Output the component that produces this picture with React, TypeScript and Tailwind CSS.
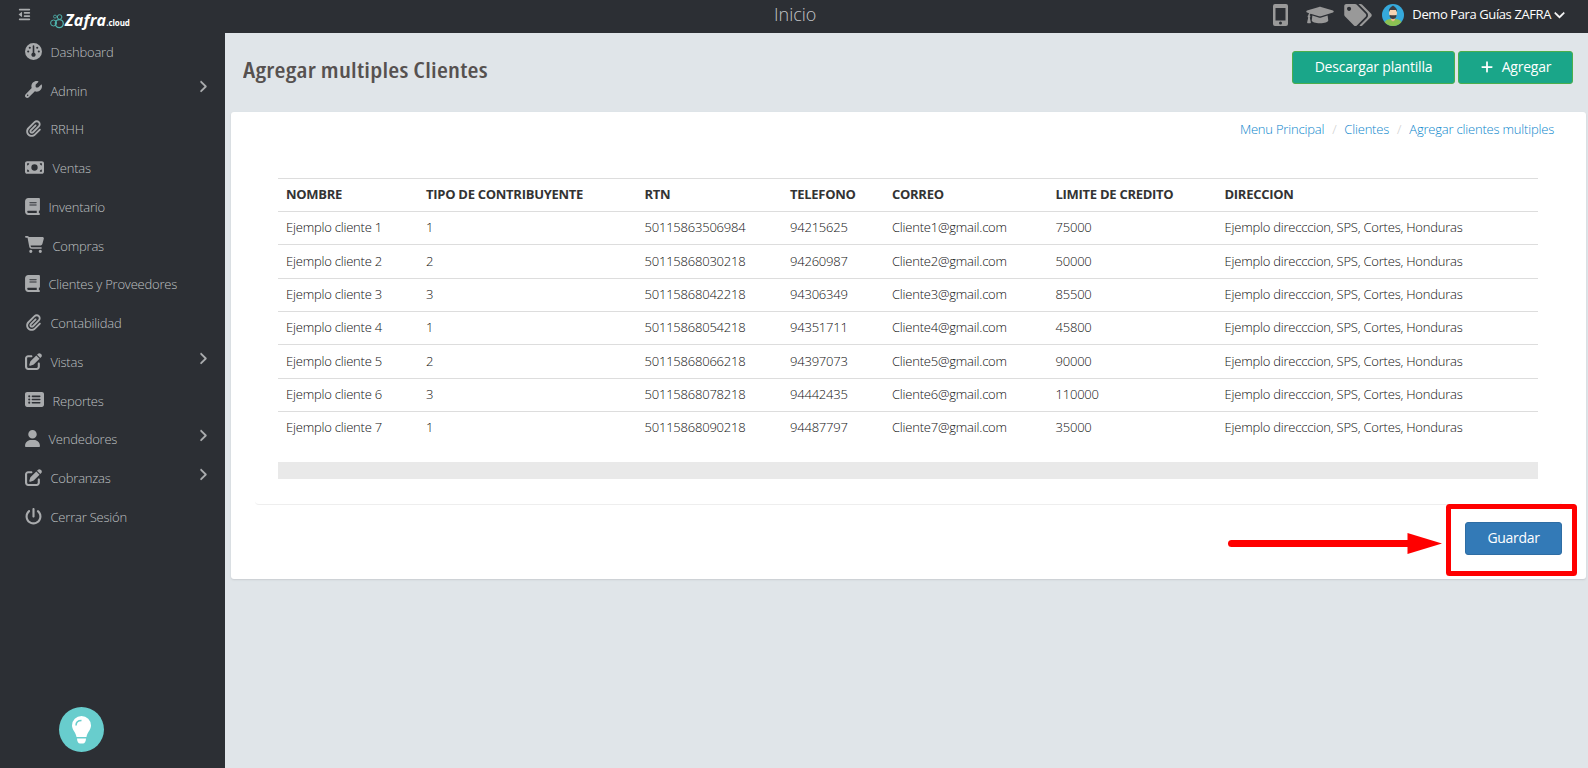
import type { IconType } from "react-icons";
import { FaGraduationCap, FaTags } from "react-icons/fa";
import {
  FaAngleRight,
  FaBook,
  FaCartShopping,
  FaChevronDown,
  FaGauge,
  FaMoneyBill,
  FaOutdent,
  FaPaperclip,
  FaPenToSquare,
  FaPlus,
  FaPowerOff,
  FaRectangleList,
  FaUser,
  FaWrench,
} from "react-icons/fa6";

type MenuItem = {
  label: string;
  icon: IconType;
  width: string;
  submenu?: boolean;
};

const menu: MenuItem[] = [
  { label: "Dashboard", icon: FaGauge, width: "w-[17px]" },
  { label: "Admin", icon: FaWrench, width: "w-[17px]", submenu: true },
  { label: "RRHH", icon: FaPaperclip, width: "w-[17px]" },
  { label: "Ventas", icon: FaMoneyBill, width: "w-[19px]" },
  { label: "Inventario", icon: FaBook, width: "w-[15px]" },
  { label: "Compras", icon: FaCartShopping, width: "w-[19px]" },
  { label: "Clientes y Proveedores", icon: FaBook, width: "w-[15px]" },
  { label: "Contabilidad", icon: FaPaperclip, width: "w-[17px]" },
  { label: "Vistas", icon: FaPenToSquare, width: "w-[17px]", submenu: true },
  { label: "Reportes", icon: FaRectangleList, width: "w-[19px]" },
  { label: "Vendedores", icon: FaUser, width: "w-[15px]", submenu: true },
  { label: "Cobranzas", icon: FaPenToSquare, width: "w-[17px]", submenu: true },
  { label: "Cerrar Sesión", icon: FaPowerOff, width: "w-[17px]" },
];

const columns = [
  { label: "NOMBRE", width: "w-[140px]" },
  { label: "TIPO DE CONTRIBUYENTE", width: "w-[218.5px]" },
  { label: "RTN", width: "w-[145.5px]" },
  { label: "TELEFONO", width: "w-[102px]" },
  { label: "CORREO", width: "w-[163.5px]" },
  { label: "LIMITE DE CREDITO", width: "w-[169px]" },
  { label: "DIRECCION", width: "w-[321.5px]" },
];

const direccion = "Ejemplo direcccion, SPS, Cortes, Honduras";

const clientes = [
  ["Ejemplo cliente 1", "1", "50115863506984", "94215625", "Cliente1@gmail.com", "75000", direccion],
  ["Ejemplo cliente 2", "2", "50115868030218", "94260987", "Cliente2@gmail.com", "50000", direccion],
  ["Ejemplo cliente 3", "3", "50115868042218", "94306349", "Cliente3@gmail.com", "85500", direccion],
  ["Ejemplo cliente 4", "1", "50115868054218", "94351711", "Cliente4@gmail.com", "45800", direccion],
  ["Ejemplo cliente 5", "2", "50115868066218", "94397073", "Cliente5@gmail.com", "90000", direccion],
  ["Ejemplo cliente 6", "3", "50115868078218", "94442435", "Cliente6@gmail.com", "110000", direccion],
  ["Ejemplo cliente 7", "1", "50115868090218", "94487797", "Cliente7@gmail.com", "35000", direccion],
];

function Logo() {
  return (
    <div className="flex items-center text-white italic">
      <svg className="w-3.5 h-[15px] mr-px" viewBox="0 0 14 15" fill="none" stroke="#4fb3ad">
        <circle cx="3.6" cy="9" r="3" />
        <circle cx="9.3" cy="9.6" r="4" strokeWidth="1.3" />
        <circle cx="5" cy="2.6" r="1.5" strokeWidth="0.8" />
        <circle cx="9.6" cy="3" r="2.3" />
      </svg>
      <span className="text-[16px] leading-5 font-bold tracking-[0.2px] -mt-[2px]">Zafra</span>
      <span className="text-[8px] leading-5 font-bold not-italic tracking-[-0.1px] pt-[4px]">.cloud</span>
    </div>
  );
}

function Avatar() {
  return (
    <svg className="w-[22px] h-[22px]" viewBox="0 0 22 22">
      <circle cx="11" cy="11" r="11" fill="#35a9dc" />
      <path d="M2.500 18C4 15.500 7 15 11 15s7 .5 8.500 3A11 11 0 0 1 2.500 18z" fill="#8cc152" />
      <path d="M9 13h4v3l-2 1.500L9 16z" fill="#e8b98e" />
      <ellipse cx="11" cy="9" rx="4" ry="4.500" fill="#f6d3b3" />
      <path d="M7 8C6.500 4.500 8.500 3.500 11 1.500c2.500 2 4.500 3 4 6.500L14 6H8z" fill="#3b3e44" />
      <path d="M7.500 11l2 .3h3l2-.3c0 2.500-1.500 4-3.500 4s-3.500-1.500-3.500-4z" fill="#3b3e44" />
    </svg>
  );
}

function Header() {
  return (
    <header className="flex h-[33px] bg-[#2c2f34] text-[#a9abad]">
      <div className="flex w-[225px] pl-[18px]">
        <FaOutdent className="w-[13px] h-[13px] mt-2" />
        <div className="ml-[19px] mt-[9px]">
          <Logo />
        </div>
      </div>
      <div className="flex-1 pl-[549px] pt-[2px] text-lg leading-[25px] font-light text-[#c3c4c6]">
        Inicio
      </div>
      <div className="flex items-start pr-[23px] text-[#999]">
        <svg className="w-[15px] h-[22px] mt-1 mr-[18px]" viewBox="0 0 15 22">
          <path
            d="M2 0h11a2 2 0 0 1 2 2v18a2 2 0 0 1-2 2H2a2 2 0 0 1-2-2V2a2 2 0 0 1 2-2zm.5 4v12.500h10V4zM7.500 17.500a1.500 1.500 0 1 0 0 3 1.500 1.500 0 0 0 0-3z"
            fill="currentColor"
            fillRule="evenodd"
          />
        </svg>
        <FaGraduationCap className="w-7 h-[22px] mt-1 mr-[10px]" />
        <FaTags className="w-7 h-[22px] mt-1 mr-[10px]" />
        <div className="mt-1 mr-2">
          <Avatar />
        </div>
        <button className="flex items-center gap-[3px] mt-[4px] text-[13px] leading-5 tracking-[-0.4px] text-white">
          Demo Para Guías ZAFRA
          <FaChevronDown className="w-[11px] h-[11px] stroke-white stroke-[30]" />
        </button>
      </div>
    </header>
  );
}

function Sidebar() {
  return (
    <aside className="flex flex-col w-[225px] shrink-0 bg-[#2c2f34] text-[#a9abad]">
      <nav>
        {menu.map(({ label, icon: Icon, width, submenu }) => (
          <a key={label} className="flex h-[38.75px] pl-[25px] pr-[17px]">
            <Icon className={`${width} h-[17px] mt-[9.5px]`} />
            <span className="flex-1 pl-[8.5px] pt-[8.9px] text-[13px] leading-5 font-light tracking-[-0.21px] text-[#bfc0c2]">
              {label}
            </span>
            {submenu && <FaAngleRight className="w-2.5 h-[15px] mt-[7.5px]" />}
          </a>
        ))}
      </nav>
      <button className="flex items-center justify-center w-[45px] h-[45px] mt-auto mb-4 ml-[59px] rounded-full bg-[#68cdcd]">
        <svg className="w-5 h-7" viewBox="0 0 20 28">
          <path d="M9.500 0a9.500 9.500 0 0 1 9.500 9.500c0 4.500-4 7-4.500 11.500h-10C4 16.500 0 14 0 9.500A9.500 9.500 0 0 1 9.500 0z" fill="#fff" />
          <path d="M5 22.500h9c0 3-1.500 5-3 5H8c-1.500 0-3-2-3-5z" fill="#fff" />
          <path d="M4 9.500c0-3 2-5 5.500-5" fill="none" stroke="#68cdcd" strokeWidth="1.500" />
        </svg>
      </button>
    </aside>
  );
}

function ClientTable() {
  return (
    <table className="w-[1260px] table-fixed text-[13px] leading-[18px]">
      <thead>
        <tr className="h-[33px] border-t border-[#ddd]">
          {columns.map((col) => (
            <th key={col.label} className={`${col.width} px-2 pb-[2px] text-left font-bold tracking-[-0.28px] text-[#333]`}>
              {col.label}
            </th>
          ))}
        </tr>
      </thead>
      <tbody>
        {clientes.map((row) => (
          <tr key={row[0]} className="h-[33.350px] border-t border-[#ddd]">
            {row.map((cell, i) => (
              <td key={i} className="px-2 pb-[2px] font-light tracking-[-0.21px] whitespace-nowrap text-[#111]">
                {cell}
              </td>
            ))}
          </tr>
        ))}
      </tbody>
    </table>
  );
}

// Red arrow and frame that point at the save button
function GuardarHint() {
  return (
    <svg className="absolute right-[9px] bottom-[3px] w-[350px] h-[72px]" viewBox="0 0 350 72">
      <path d="M4.500 39.500h180" stroke="#f00" strokeWidth="7" strokeLinecap="round" />
      <path d="M180.500 29l34.500 10.500-34.500 10.500z" fill="#f00" />
      <rect x="221.500" y="2.500" width="126" height="67" rx="1" fill="none" stroke="#f00" strokeWidth="5" />
    </svg>
  );
}

export default function App() {
  return (
    <div className="h-screen flex flex-col overflow-hidden bg-[#e0e5e9] font-['Open_Sans',sans-serif]">
      <Header />
      <div className="flex flex-1 min-h-0">
        <Sidebar />
        <main className="flex-1 min-w-0">
          <div className="flex justify-between h-[79px] pl-[18px] pr-[15px] pt-[18px]">
            <h1 className="pt-1 origin-left scale-x-[1.14] [font-stretch:75%] font-semibold text-[22px] leading-7 tracking-[0.2px] text-[#565150]">
              Agregar multiples Clientes
            </h1>
            <div className="flex gap-[3px] text-sm tracking-[-0.2px] text-white">
              <button className="flex items-center justify-center w-[163px] h-[33px] pb-[2px] rounded-[3px] border border-[#4cae4c] bg-[#1aa689]">
                Descargar plantilla
              </button>
              <button className="flex items-center justify-center gap-2 w-[115px] h-[33px] pb-[2px] rounded-[3px] border border-[#4cae4c] bg-[#1aa689]">
                <FaPlus className="w-3.5 h-3.5" />
                Agregar
              </button>
            </div>
          </div>

          <section className="relative h-[467px] ml-1.5 mr-0.5 rounded-[3px] bg-white shadow-[0_1px_2px_#c8ccd0]">
            <nav className="flex justify-end gap-2 h-[66px] pr-8 pt-[7px] text-[13px] leading-5 font-light tracking-[-0.2px] text-[#0b86cc]">
              <a>Menu Principal</a>
              <span className="text-[#ccc]">/</span>
              <a>Clientes</a>
              <span className="text-[#ccc]">/</span>
              <a>Agregar clientes multiples</a>
            </nav>
            <div className="flex flex-col justify-between h-[301px] pl-[47px]">
              <ClientTable />
              <div className="w-[1260px] h-[17px] bg-[#e9e9e9]" />
            </div>
            <div className="ml-6 mr-6 h-[26px] border-b border-[#eee] rounded-b" />
            <div className="flex justify-end pr-6 pt-[17px]">
              <button className="w-[97px] h-[33px] pb-[2px] rounded-[3px] border border-[#2e6da4] bg-[#337ab7] text-sm tracking-[-0.3px] text-white">
                Guardar
              </button>
            </div>
            <GuardarHint />
          </section>
        </main>
      </div>
    </div>
  );
}
